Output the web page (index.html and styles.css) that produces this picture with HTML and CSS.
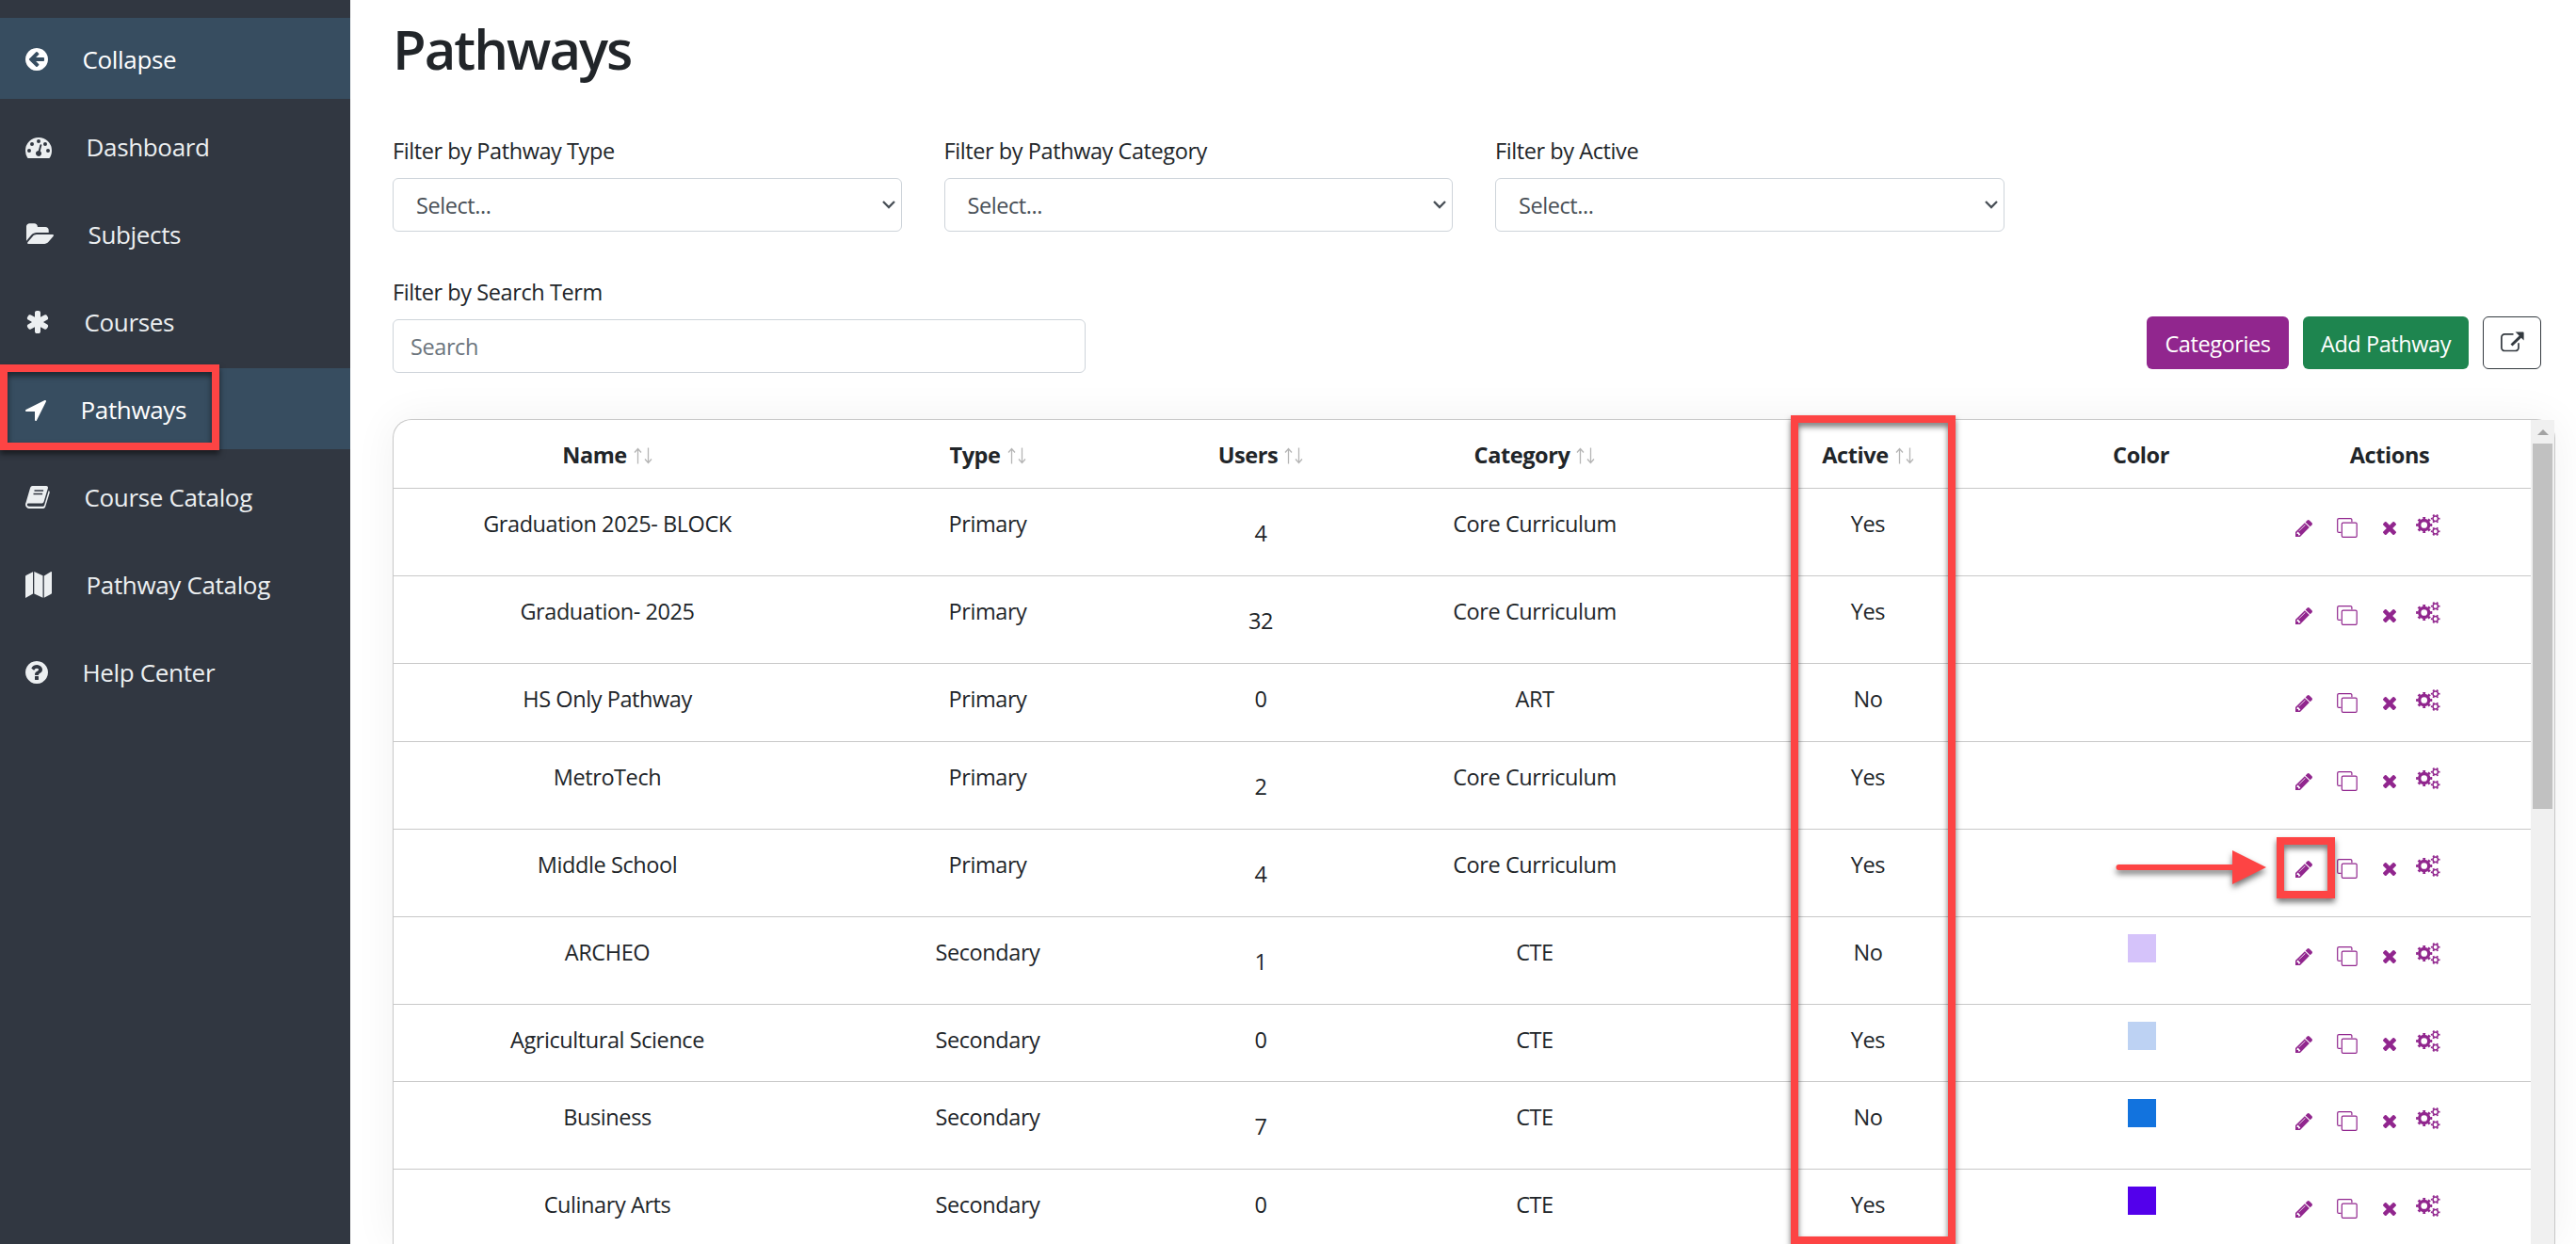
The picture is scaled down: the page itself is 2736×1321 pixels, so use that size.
FILE: index.html
```
<!DOCTYPE html>
<html lang="en">
  <head>
    <meta charset="UTF-8" />
    <meta name="viewport" content="width=device-width, initial-scale=1.0" />
    <title>Pathways</title>
    <link rel="stylesheet" href="styles.css">
  </head>
  <body>
    <svg class="sprite" xmlns="http://www.w3.org/2000/svg">
      <symbol id="i-collapse" viewBox="128 0 1536 1792"><path d="M1408 960v-128q0-26-19-45t-45-19h-502l189-189q19-19 19-45t-19-45l-91-91q-18-18-45-18t-45 18l-362 362-91 91q-18 18-18 45t18 45l91 91 362 362q18 18 45 18t45-18l91-91q18-18 18-45t-18-45l-189-189h502q26 0 45-19t19-45zm256-64q0 209-103 385.500t-279.500 279.500-385.500 103-385.500-103-279.500-279.500-103-385.500 103-385.500 279.500-279.500 385.500-103 385.500 103 279.500 279.500 103 385.500z"/></symbol>
      <symbol id="i-dashboard" viewBox="0 0 28 28"><path fill-rule="evenodd" d="M0 18a14 14 0 0 1 28 0c0 2.700-.7 5.200-2.100 7.500-.2.300-.5.500-.9.500H3c-.4 0-.7-.2-.9-.5A14.300 14.300 0 0 1 0 18zM6 18a2 2 0 1 0-4 0 2 2 0 0 0 4 0zM9 11a2 2 0 1 0-4 0 2 2 0 0 0 4 0zM16 8a2 2 0 1 0-4 0 2 2 0 0 0 4 0zM23 11a2 2 0 1 0-4 0 2 2 0 0 0 4 0zM26 18a2 2 0 1 0-4 0 2 2 0 0 0 4 0zM15.700 18.400l1.600-6c.3-1.300-1.600-1.800-1.900-.5l-1.600 6a3 3 0 1 0 1.900.5z"/></symbol>
      <symbol id="i-subjects" viewBox="0 0 1943 1792"><path d="M1943 952q0 31-31 66l-336 396q-43 51-120.500 86.500t-143.500 35.500h-1088q-34 0-60.500-13t-26.500-43q0-31 31-66l336-396q43-51 120.500-86.500t143.500-35.500h1088q34 0 60.500 13t26.500 43zm-343-344v160h-832q-94 0-197 47.500t-164 119.500l-337 396-5 6q0-4-.5-12.500t-.5-12.500v-960q0-92 66-158t158-66h320q92 0 158 66t66 158v32h544q92 0 158 66t66 158z"/></symbol>
      <symbol id="i-courses" viewBox="64 0 1664 1792"><path d="M1546 1050q46 26 59.500 77.500t-12.500 97.500l-64 110q-26 46-77.500 59.500t-97.500-12.500l-266-153v307q0 52-38 90t-90 38h-128q-52 0-90-38t-38-90v-307l-266 153q-46 26-97.500 12.500t-77.500-59.500l-64-110q-26-46-12.500-97.500t59.500-77.500l266-154-266-154q-46-26-59.500-77.500t12.500-97.500l64-110q26-46 77.500-59.500t97.500 12.500l266 153v-307q0-52 38-90t90-38h128q52 0 90 38t38 90v307l266-153q46-26 97.500-12.500t77.500 59.500l64 110q26 46 12.500 97.500t-59.500 77.500l-266 154z"/></symbol>
      <symbol id="i-pathways" viewBox="192 0 1408 1792"><path d="M1593 349l-640 1280q-17 35-57 35-5 0-15-2-22-5-35.500-22.500t-13.500-39.500v-576h-576q-22 0-39.500-13.500t-22.500-35.500 4-42 29-30l1280-640q13-7 29-7 27 0 45 19 15 14 18.500 34.500t-6.500 39.500z"/></symbol>
      <symbol id="i-book" viewBox="0 0 26 28"><path d="M7.500 2H22c1.600 0 2.300 1 1.900 2.500l-4.300 14.200c-.4 1.200-1.200 1.800-2.500 1.800H3.600c-1 0-1.800.4-1.800 1.300 0 1.300.9 1.900 2.200 1.900h14.300c.9 0 1.500-.4 1.800-1.200L24.700 7c1 .5 1.200 1.300.9 2.400l-4.400 14.500c-.4 1.300-1.500 2.100-2.900 2.100H4c-2 0-4-1.500-4-3.900 0-1 .2-1.400.5-2.300L4.800 4.900C5.300 3 6.100 2 7.500 2z"/><path d="M9.500 7h9.600M8.500 10.500h9.600" stroke="#313741" stroke-width="1.300"/></symbol>
      <symbol id="i-map" viewBox="0 0 28 28"><path d="M8 0.200v23.300L0 28V5.200c0-.6.200-.9.600-1.100zM9.300 0l9.200 4.300v23.400l-9.200-4.300zM28 .8v22c0 .5-.2.800-.6 1l-7.600 4V4.400L26.800.2c.7-.4 1.200 0 1.200.6z"/></symbol>
      <symbol id="i-help" viewBox="128 0 1536 1792"><path d="M1024 1376v-192q0-14-9-23t-23-9h-192q-14 0-23 9t-9 23v192q0 14 9 23t23 9h192q14 0 23-9t9-23zm256-672q0-88-55.500-163t-138.500-116-170-41q-243 0-371 213-15 24 8 42l132 100q7 6 19 6 16 0 25-12 53-68 86-92 34-24 86-24 48 0 85.500 26t37.500 59q0 38-20 61t-68 45q-63 28-115.500 86.500t-52.500 125.500v36q0 14 9 23t23 9h192q14 0 23-9t9-23q0-19 21.500-49.500t54.500-49.500q32-18 49-28.500t46-35 44.500-48 28-60.500 12.500-81zm384 192q0 209-103 385.500t-279.500 279.500-385.500 103-385.500-103-279.500-279.500-103-385.500 103-385.500 279.500-279.500 385.500-103 385.500 103 279.500 279.500 103 385.500z"/></symbol>
      <symbol id="i-pencil" viewBox="128 149 1515 1515"><path d="M491 1536l91-91-235-235-91 91v107h128v128h107zm523-928q0-22-22-22-10 0-17 7l-542 542q-7 7-7 17 0 22 22 22 10 0 17-7l542-542q7-7 7-17zm-54-192l416 416-832 832h-416v-416zm683 96q0 53-37 90l-166 166-416-416 166-165q36-38 90-38 53 0 91 38l235 234q37 39 37 91z"/></symbol>
      <symbol id="i-clone" viewBox="0 0 22 21"><path fill="none" stroke="currentColor" stroke-width="1.200" d="M4.500 15.400H2.200A1.500 1.500 0 0 1 .7 13.900V2.100A1.500 1.500 0 0 1 2.200.6h12.200a1.500 1.500 0 0 1 1.500 1.500v2.200"/><rect x="5.300" y="5.200" width="15.900" height="15.100" rx="1.300" fill="none" stroke="currentColor" stroke-width="1.200"/></symbol>
      <symbol id="i-times" viewBox="302 366 1188 1188"><path d="M1490 1322q0 40-28 68l-136 136q-28 28-68 28t-68-28l-294-294-294 294q-28 28-68 28t-68-28l-136-136q-28-28-28-68t28-68l294-294-294-294q-28-28-28-68t28-68l136-136q28-28 68-28t68 28l294 294 294-294q28-28 68-28t68 28l136 136q28 28 28 68t-28 68l-294 294 294 294q28 28 28 68z"/></symbol>
      <symbol id="i-cogs" viewBox="0 0 26 23">
        <g fill="none" stroke="currentColor">
          <circle cx="8.700" cy="11.500" r="5" stroke-width="3.300"/>
          <circle cx="8.700" cy="11.500" r="7.400" stroke-width="2.400" pathLength="80" stroke-dasharray="4.800 5.200" stroke-dashoffset="2.400"/>
          <circle cx="20.700" cy="4.700" r="2.700" stroke-width="1.500"/>
          <circle cx="20.700" cy="4.700" r="4" stroke-width="1.700" pathLength="60" stroke-dasharray="4.400 5.600" stroke-dashoffset="2.200"/>
          <circle cx="20.700" cy="18.300" r="2.700" stroke-width="1.500"/>
          <circle cx="20.700" cy="18.300" r="4" stroke-width="1.700" pathLength="60" stroke-dasharray="4.400 5.600" stroke-dashoffset="2.200"/>
        </g>
      </symbol>
      <symbol id="i-external" viewBox="0 0 25 22"><path fill="none" stroke="currentColor" stroke-width="1.700" d="M13.500 2.900H4.200A3.300 3.300 0 0 0 .9 6.200v11a3.300 3.300 0 0 0 3.300 3.300h11.500a3.300 3.300 0 0 0 3.300-3.300v-5"/><path d="M15.600.6h8c.6 0 1 .4 1 1v7.800l-2.800-2.700-9.300 8.900-2-2 9.200-9z"/></symbol>
      <symbol id="i-sort" viewBox="0 0 20 18"><path fill="none" stroke="currentColor" stroke-width="1.300" d="M4.500 17.500V1.500M1 5.500l3.500-4 3.500 4M15.500.5v16M12 12.500l3.500 4 3.500-4"/></symbol>
      <symbol id="i-chevron" viewBox="0 0 14 9"><path fill="none" stroke="currentColor" stroke-width="2.300" d="M1 1l6 6 6-6"/></symbol>
    </svg>

    <nav class="sidebar">
      <a class="nav-item active"><svg width="24" height="28"><use href="#i-collapse"/></svg><span>Collapse</span></a>
      <a class="nav-item"><svg width="28" height="28"><use href="#i-dashboard"/></svg><span>Dashboard</span></a>
      <a class="nav-item"><svg width="30" height="28"><use href="#i-subjects"/></svg><span>Subjects</span></a>
      <a class="nav-item"><svg width="26" height="28"><use href="#i-courses"/></svg><span>Courses</span></a>
      <a class="nav-item active"><svg width="22" height="28"><use href="#i-pathways"/></svg><span>Pathways</span></a>
      <a class="nav-item"><svg width="26" height="28"><use href="#i-book"/></svg><span>Course Catalog</span></a>
      <a class="nav-item"><svg width="28" height="28"><use href="#i-map"/></svg><span>Pathway Catalog</span></a>
      <a class="nav-item"><svg width="24" height="28"><use href="#i-help"/></svg><span>Help Center</span></a>
    </nav>

    <main class="content">
      <h1>Pathways</h1>

      <div class="filters">
        <div class="filter">
          <label>Filter by Pathway Type</label>
          <div class="select">Select... <svg width="14" height="9"><use href="#i-chevron"/></svg></div>
        </div>
        <div class="filter">
          <label>Filter by Pathway Category</label>
          <div class="select">Select... <svg width="14" height="9"><use href="#i-chevron"/></svg></div>
        </div>
        <div class="filter">
          <label>Filter by Active</label>
          <div class="select">Select... <svg width="14" height="9"><use href="#i-chevron"/></svg></div>
        </div>
      </div>

      <div class="toolbar">
        <div class="search">
          <label for="search">Filter by Search Term</label>
          <input type="text" id="search" placeholder="Search" />
        </div>
        <div class="buttons">
          <button class="btn btn-purple">Categories</button>
          <button class="btn btn-green">Add Pathway</button>
          <button class="btn btn-outline"><svg width="25" height="22"><use href="#i-external"/></svg></button>
        </div>
      </div>

      <div class="card">
        <table>
          <colgroup>
            <col class="col-name"><col class="col-type"><col class="col-users"><col class="col-category"><col class="col-active"><col class="col-color"><col class="col-actions">
          </colgroup>
          <thead>
            <tr>
              <th>Name<svg class="sort"><use href="#i-sort"/></svg></th>
              <th>Type<svg class="sort"><use href="#i-sort"/></svg></th>
              <th>Users<svg class="sort"><use href="#i-sort"/></svg></th>
              <th>Category<svg class="sort"><use href="#i-sort"/></svg></th>
              <th>Active<svg class="sort"><use href="#i-sort"/></svg></th>
              <th>Color</th>
              <th>Actions</th>
            </tr>
          </thead>
          <tbody id="pathwayList"></tbody>
        </table>
        <div class="scrollbar">
          <div class="scroll-up"></div>
          <div class="scroll-thumb"></div>
        </div>
      </div>
    </main>

    <div class="mark mark-nav"></div>
    <div class="mark mark-active"></div>
    <div class="mark mark-edit"></div>
    <svg class="mark-arrow" width="160" height="38" viewBox="0 0 160 38"><path d="M3.500 19H128" stroke="#fd4444" stroke-width="6" stroke-linecap="round"/><path d="M124 1l36 18-36 18z" fill="#fd4444"/></svg>

    <script>
      const pathwayList = document.getElementById('pathwayList');

      const pathways = [
        { name: 'Graduation 2025- BLOCK', type: 'Primary', users: 4, category: 'Core Curriculum', active: true },
        { name: 'Graduation- 2025', type: 'Primary', users: 32, category: 'Core Curriculum', active: true },
        { name: 'HS Only Pathway', type: 'Primary', users: 0, category: 'ART', active: false },
        { name: 'MetroTech', type: 'Primary', users: 2, category: 'Core Curriculum', active: true },
        { name: 'Middle School', type: 'Primary', users: 4, category: 'Core Curriculum', active: true },
        { name: 'ARCHEO', type: 'Secondary', users: 1, category: 'CTE', active: false, color: '#d5c3fa' },
        { name: 'Agricultural Science', type: 'Secondary', users: 0, category: 'CTE', active: true, color: '#bdd2f3' },
        { name: 'Business', type: 'Secondary', users: 7, category: 'CTE', active: false, color: '#1273de' },
        { name: 'Culinary Arts', type: 'Secondary', users: 0, category: 'CTE', active: true, color: '#5300eb' },
      ];

      function renderPathways() {
        pathwayList.innerHTML = '';
        for (const pathway of pathways) {
          const row = document.createElement('tr');
          row.classList.add(pathway.users ? 'has-users' : 'no-users');
          row.innerHTML = `
      <td>${pathway.name}</td>
      <td>${pathway.type}</td>
      <td class="users">${pathway.users}</td>
      <td>${pathway.category}</td>
      <td>${pathway.active ? 'Yes' : 'No'}</td>
      <td>${pathway.color ? `<div class="swatch" style="background-color: ${pathway.color}"></div>` : ''}</td>
      <td>
        <div class="actions">
          <svg class="pencil"><use href="#i-pencil"/></svg>
          <svg class="clone"><use href="#i-clone"/></svg>
          <svg class="times"><use href="#i-times"/></svg>
          <svg class="cogs"><use href="#i-cogs"/></svg>
        </div>
      </td>
    `;
          pathwayList.appendChild(row);
        }
      }

      renderPathways();
    </script>
  </body>
</html>
```
FILE: styles.css
```
* {
  box-sizing: border-box;
}
body {
  margin: 0;
  height: 1321px;
  overflow: hidden;
  position: relative;
  display: flex;
  font-family: "Open Sans", "Noto Sans", sans-serif;
  font-size: 23.5px;
  line-height: 36px;
  letter-spacing: -0.42px;
  color: #212529;
  background-color: #fff;
}
.sprite {
  position: absolute;
  width: 0;
  height: 0;
}
svg {
  fill: currentColor;
}
.sidebar {
  width: 372px;
  flex-shrink: 0;
  padding-top: 19px;
  background-color: #313741;
  position: relative;
  z-index: 1;
}
.nav-item {
  display: flex;
  align-items: center;
  gap: 36.5px;
  height: 86px;
  margin-bottom: 7px;
  padding-left: 27px;
  font-size: 26px;
  letter-spacing: -0.34px;
  color: #eceff1;
}
.nav-item svg {
  margin-top: 2px;
}
.nav-item span {
  padding-top: 2px;
}
.nav-item.active {
  background-color: #374d60;
  color: #fff;
}
.content {
  flex: 1;
  display: flex;
  flex-direction: column;
  height: 1321px;
  padding: 0 22px 0 45px;
  overflow: hidden;
}
h1 {
  margin: 0;
  height: 142px;
  padding-top: 15px;
  font-size: 58px;
  font-weight: 600;
  line-height: 74px;
  letter-spacing: -2px;
}
label {
  display: block;
  height: 47px;
}
.filters {
  display: flex;
  gap: 45px;
}
.filter {
  width: 540.5px;
}
.select {
  display: flex;
  justify-content: space-between;
  align-items: center;
  height: 57px;
  padding: 1px 6px 0 24px;
  border: 1px solid #ced4da;
  border-radius: 6px;
  color: #495057;
}
.select svg {
  margin-bottom: 1px;
}
.toolbar {
  display: flex;
  justify-content: space-between;
  align-items: flex-end;
  margin-top: 46px;
}
.search input {
  display: block;
  width: 736px;
  height: 57px;
  padding: 1px 18px 0;
  border: 1px solid #ced4da;
  border-radius: 6px;
  font: inherit;
  letter-spacing: inherit;
}
.search input::placeholder {
  color: #6c757d;
}
.buttons {
  display: flex;
  gap: 15px;
  padding-right: 15px;
  margin-bottom: 4px;
}
.btn {
  height: 56px;
  padding: 2px 0 0;
  border: none;
  border-radius: 6px;
  font: inherit;
  letter-spacing: inherit;
  color: #fff;
}
.btn-purple {
  width: 151px;
  background-color: #91268e;
}
.btn-green {
  width: 176px;
  background-color: #1e854f;
}
.btn-outline {
  width: 62px;
  border: 1px solid #343a40;
  background-color: #fff;
  color: #343a40;
}
.card {
  display: flex;
  flex: 1;
  min-height: 0;
  align-items: flex-start;
  margin-top: 49px;
  width: 2297px;
  border: 1px solid #c8c8c8;
  border-bottom: none;
  border-radius: 20px 20px 0 0;
  box-shadow: 0 0 45px rgba(0, 0, 0, 0.06);
}
table {
  width: 2270px;
  table-layout: fixed;
  border-collapse: separate;
  border-spacing: 0;
  text-align: center;
}
.col-name {
  width: 454px;
}
.col-type {
  width: 354px;
}
.col-users {
  width: 226px;
}
.col-category {
  width: 356px;
}
.col-active {
  width: 352px;
}
.col-color {
  width: 228px;
}
.col-actions {
  width: 300px;
}
th,
td {
  padding: 19px 0 0;
  vertical-align: top;
  border-bottom: 1px solid #c8c8c8;
}
th {
  height: 73px;
  font-weight: 700;
}
td {
  height: 93px;
}
.no-users td {
  height: 82.5px;
}
tbody tr:last-child td {
  height: 79px;
  border-bottom: none;
}
.has-users .users {
  padding-top: 29px;
}
.sort {
  width: 20px;
  height: 18px;
  margin-left: 7px;
  vertical-align: -1px;
  color: #b5b5b5;
}
.swatch {
  width: 30px;
  height: 30px;
  margin: -1px 98px 0 100px;
}
.actions {
  display: flex;
  padding-left: 50px;
  margin-top: 8px;
  color: #91268e;
}
.pencil {
  width: 18px;
  height: 18px;
  margin: 6px 26px 0 0;
}
.clone {
  width: 22px;
  height: 21px;
  margin: 4px 27px 0 0;
}
.times {
  width: 14px;
  height: 14px;
  margin: 8px 21px 0 0;
}
.cogs {
  width: 26px;
  height: 23px;
}
.scrollbar {
  align-self: stretch;
  width: 25px;
  padding: 10px 2px 0;
  background-color: #f0f0f0;
}
.scroll-up {
  width: 0;
  margin: 0 auto 9px;
  border: 6px solid transparent;
  border-top: none;
  border-bottom-color: #a3a3a3;
}
.scroll-thumb {
  height: 388px;
  background-color: #c1c1c1;
}
/* highlight boxes over the page */
.mark {
  position: absolute;
  z-index: 2;
  border: 8px solid #fd4444;
  filter: drop-shadow(0 4px 3px rgba(0, 0, 0, 0.55));
}
.mark-nav {
  left: 0;
  top: 387px;
  width: 233px;
  height: 91px;
}
.mark-active {
  left: 1902px;
  top: 441px;
  width: 175px;
  height: 880px;
}
.mark-edit {
  left: 2418px;
  top: 889px;
  width: 62px;
  height: 65px;
}
.mark-arrow {
  position: absolute;
  z-index: 2;
  left: 2247px;
  top: 902px;
  filter: drop-shadow(0 4px 3px rgba(0, 0, 0, 0.55));
}
```
